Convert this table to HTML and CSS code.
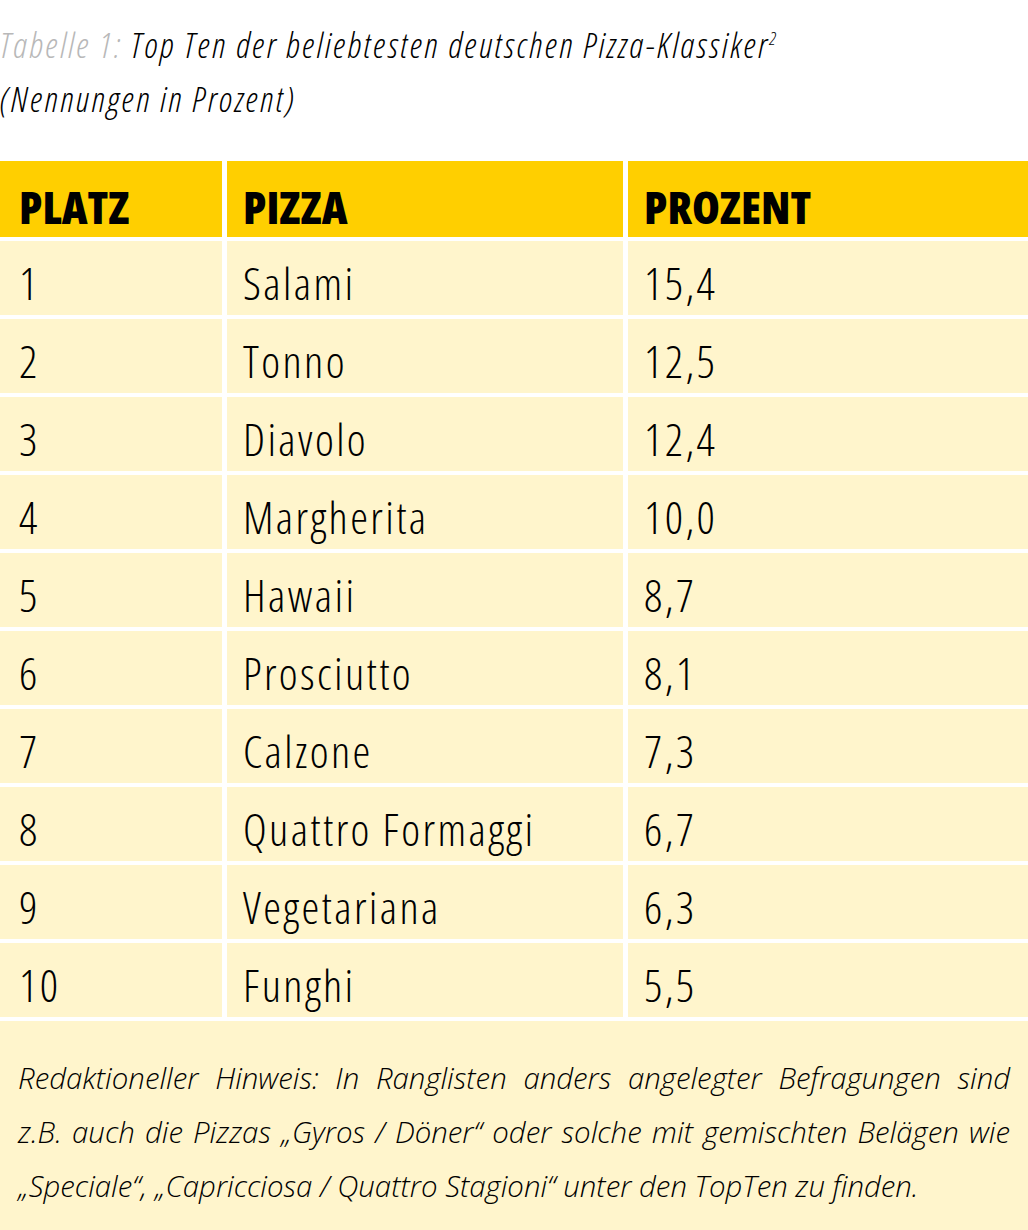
FILE: index.html
```html
<!DOCTYPE html>
<html lang="de">
<head>
<meta charset="utf-8">
<title>Top Ten Pizza-Klassiker</title>
<link rel="stylesheet" href="styles.css">
</head>
<body>
<div class="page">
  <div class="caption">
    <p><span class="label">Tabelle 1:</span> Top Ten der beliebtesten deutschen Pizza-Klassiker<sup>2</sup></p>
    <p>(Nennungen in Prozent)</p>
  </div>
  <div class="table">
    <div class="cell head c1">PLATZ</div>
    <div class="cell head c2">PIZZA</div>
    <div class="cell head c3">PROZENT</div>

    <div class="cell c1">1</div><div class="cell c2">Salami</div><div class="cell c3">15,4</div>
    <div class="cell c1">2</div><div class="cell c2">Tonno</div><div class="cell c3">12,5</div>
    <div class="cell c1">3</div><div class="cell c2">Diavolo</div><div class="cell c3">12,4</div>
    <div class="cell c1">4</div><div class="cell c2">Margherita</div><div class="cell c3">10,0</div>
    <div class="cell c1">5</div><div class="cell c2">Hawaii</div><div class="cell c3">8,7</div>
    <div class="cell c1">6</div><div class="cell c2">Prosciutto</div><div class="cell c3">8,1</div>
    <div class="cell c1">7</div><div class="cell c2">Calzone</div><div class="cell c3">7,3</div>
    <div class="cell c1">8</div><div class="cell c2">Quattro Formaggi</div><div class="cell c3">6,7</div>
    <div class="cell c1">9</div><div class="cell c2">Vegetariana</div><div class="cell c3">6,3</div>
    <div class="cell c1">10</div><div class="cell c2">Funghi</div><div class="cell c3">5,5</div>
  </div>
  <div class="note">
    <p><span class="line">Redaktioneller Hinweis: In Ranglisten anders angelegter Befragungen sind</span>
    <span class="line">z.B. auch die Pizzas „Gyros / Döner“ oder solche mit gemischten Belägen wie</span>
    <span class="line last">„Speciale“, „Capricciosa / Quattro Stagioni“ unter den TopTen zu finden.</span></p>
  </div>
</div>
</body>
</html>
```

FILE: styles.css
```css
html, body {
  margin: 0;
  padding: 0;
  background: #ffffff;
}

body {
  font-family: "Open Sans", "Liberation Sans", sans-serif;
  color: #000000;
}

.page {
  width: 1028px;
}

.caption {
  padding-top: 18px;
  font-style: italic;
  font-weight: 300;
  font-stretch: 75%;
  font-size: 35px;
  letter-spacing: 2.4px;
  line-height: 54px;
}

.caption p {
  margin: 0;
}

.caption .label {
  color: #b8b8b8;
}

.caption sup {
  font-size: 18px;
  letter-spacing: 0;
  line-height: 0;
  vertical-align: 13px;
}

.table {
  margin-top: 35px;
  display: grid;
  grid-template-columns: 222px 396px 1fr;
  grid-template-rows: 76px;
  grid-auto-rows: 74px;
  gap: 4px 5px;
}

.cell {
  display: flex;
  align-items: flex-end;
  background: #fff5cc;
  font-size: 45px;
  font-weight: 300;
  font-stretch: 75%;
  letter-spacing: 2.4px;
  line-height: 45px;
  padding-bottom: 10px;
  padding-left: 16px;
}

.cell.c1 {
  padding-left: 19px;
}

.cell.head {
  background: #ffcf00;
  font-weight: 800;
  letter-spacing: 0;
  padding-bottom: 8px;
}

.note {
  margin-top: 4px;
  background: #fff5cc;
  padding: 30px 18px 29px 18px;
  font-style: italic;
  font-weight: 300;
  font-size: 29.4px;
  line-height: 54px;
}

.note p {
  margin: 0;
}

.note .line {
  display: block;
  text-align: justify;
  text-align-last: justify;
}

.note .line.last {
  text-align-last: left;
}
```
